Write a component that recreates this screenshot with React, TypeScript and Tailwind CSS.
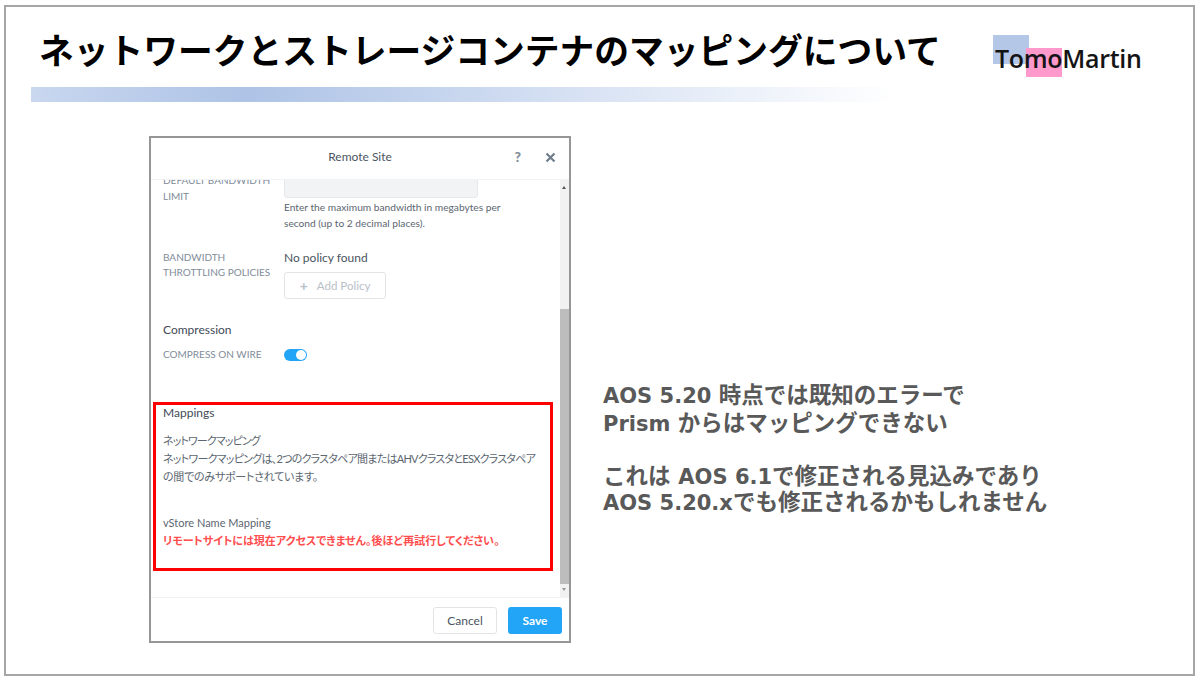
import React from "react";

const jp = "font-['Noto_Sans_CJK_JP','Noto_Sans',sans-serif]";
const ui = "font-['Lato','Noto_Sans_CJK_JP',sans-serif]";

function Label({ children }: { children: React.ReactNode }) {
  return <div className="w-[121px] shrink-0 text-[10px] leading-[15px] text-[#7f8c99]">{children}</div>;
}

function L({ children }: { children: React.ReactNode }) {
  return <span className="text-[21px]">{children}</span>;
}

export default function App() {
  return (
    <div className="w-[1200px] h-[679px] bg-white pl-[4px] pr-[5px] pt-[5px] pb-[3px] overflow-hidden">
      <div className="h-full border-2 border-[#a6a6a6] flex flex-col">
        <div className="flex h-[80px] shrink-0 pl-[33px]">
          <h1 className={`${jp} text-[34.75px] leading-[40px] font-bold text-black whitespace-nowrap mt-[22px] w-[954px]`}>
            ネットワークとストレージコンテナのマッピングについて
          </h1>
          <div className="relative mt-[28px] w-[150px] h-[42px]">
            <div className="absolute left-0 top-0 w-[36px] h-[29px] bg-[#b4c7e7]" />
            <div className="absolute left-[33px] top-[13px] w-[36px] h-[29px] bg-[#ff99cc]" />
            <div className="absolute left-[2px] top-[9px] font-['Open_Sans',sans-serif] text-[25px] leading-[28px] font-semibold text-[#141414] tracking-[-0.3px]">TomoMartin</div>
          </div>
        </div>
        <div className="ml-[25px] w-[864px] h-[15px] shrink-0 bg-gradient-to-r from-[#c9d7ef] via-[#aec3e6] via-[25%] to-white" />
        <div className="flex mt-[34px] pl-[143px]">
          <div className={`${ui} w-[422px] h-[507px] border-2 border-[#969696] bg-white flex flex-col shrink-0`}>
            <div className="relative h-[42px] shrink-0 flex items-center justify-center border-b border-[#f0f2f4]">
              <span className="text-[12px] text-[#4a5560] mt-[-4px]">Remote Site</span>
              <span className="absolute right-[48px] top-[11px] text-[14px] leading-[16px] font-black text-[#7f8c99]">?</span>
              <svg className="absolute right-[13px] top-[14px]" width="11" height="11" viewBox="0 0 11 11">
                <path d="M1.5 1.5 L9.5 9.5 M9.5 1.5 L1.5 9.5" stroke="#6f7d8b" strokeWidth="2.2" />
              </svg>
            </div>
            <div className="flex h-[418px] shrink-0 border-b border-[#f0f2f4]">
              <div className="flex-1 overflow-hidden">
                <div className="mt-[-8px] pl-[12px]">
                  <div className="flex">
                    <div className="w-[121px] shrink-0 text-[10px] leading-[16px] text-[#7f8c99]">DEFAULT BANDWIDTH<br />LIMIT</div>
                    <div>
                      <div className="w-[194px] h-[26px] bg-[#f2f3f5] border border-[#e6e8eb] rounded-b-[3px]" />
                      <p className="mt-[1px] text-[10.2px] leading-[16px] text-[#5c6670] whitespace-nowrap">
                        Enter the maximum bandwidth in megabytes per<br />second (up to 2 decimal places).
                      </p>
                    </div>
                  </div>
                  <div className="flex mt-[19px]">
                    <Label>BANDWIDTH<br />THROTTLING POLICIES</Label>
                    <div>
                      <div className="text-[12px] leading-[16px] text-[#4a5560]">No policy found</div>
                      <div className="mt-[6px] w-[102px] h-[27px] border border-[#e2e5e8] rounded-[3px] flex items-center justify-center gap-[9px] text-[11.5px] text-[#b8c0c8]">
                        <span className="text-[14px] leading-none font-bold">+</span>
                        <span>Add Policy</span>
                      </div>
                    </div>
                  </div>
                  <div className="mt-[23px] text-[12px] leading-[16px] text-[#3f4a55]">Compression</div>
                  <div className="flex items-center mt-[9px]">
                    <Label>COMPRESS ON WIRE</Label>
                    <div className="w-[23px] h-[12px] rounded-full bg-[#22a5f7] relative">
                      <div className="absolute right-[1px] top-[1px] w-[10px] h-[10px] rounded-full bg-white" />
                    </div>
                  </div>
                </div>
                <div className="ml-[2px] mt-[40px] w-[400px] h-[169px] border-[3px] border-[#ff0000] pl-[7px]">
                  <div className="text-[12px] leading-[16px] text-[#3f4a55]">Mappings</div>
                  <div className="mt-[11px] text-[11px] leading-[18px] text-[#5c6670] [font-feature-settings:'palt'] whitespace-nowrap">
                    <div className="tracking-[-0.9px]">ネットワークマッピング</div>
                    <div className="tracking-[-0.75px]">ネットワークマッピングは、2つのクラスタペア間またはAHVクラスタとESXクラスタペア</div>
                    <div className="tracking-[-0.25px]">の間でのみサポートされています。</div>
                  </div>
                  <div className="mt-[28px] text-[11px] leading-[18px] text-[#5c6670]">vStore Name Mapping</div>
                  <div className="text-[11px] leading-[18px] font-bold text-[#ff4d4d] [font-feature-settings:'palt'] whitespace-nowrap">
                    リモートサイトには現在アクセスできません。後ほど再試行してください。
                  </div>
                </div>
              </div>
              <div className="w-[9px] shrink-0 bg-[#f1f1f1] relative">
                <div className="absolute top-[6px] left-[2px] w-0 h-0 border-l-[2.5px] border-r-[2.5px] border-b-[3px] border-l-transparent border-r-transparent border-b-[#555]" />
                <div className="absolute top-[129px] bottom-[13px] left-0 right-0 bg-[#bdbdbd]" />
                <div className="absolute bottom-[6px] left-[2px] w-0 h-0 border-l-[2.5px] border-r-[2.5px] border-t-[3px] border-l-transparent border-r-transparent border-t-[#999]" />
              </div>
            </div>
            <div className="flex-1 flex items-center justify-end gap-[11px] pr-[7px] pt-[2px]">
              <div className="w-[64px] h-[27px] border border-[#e2e5e8] rounded-[3px] flex items-center justify-center text-[12px] text-[#4a5560]">Cancel</div>
              <div className="w-[54px] h-[27px] bg-[#22a5f7] rounded-[3px] flex items-center justify-center text-[12px] font-bold text-white">Save</div>
            </div>
          </div>
          <div className="ml-[32px] mt-[246px] font-['DejaVu_Sans','Noto_Sans_CJK_JP',sans-serif] text-[#595959] text-[22.5px] leading-[27px] font-bold whitespace-nowrap">
            <div className="h-[28px]"><L>AOS 5.20 </L>時点では既知のエラーで</div>
            <div className="h-[28px]"><L>Prism </L>からはマッピングできない</div>
            <div className="h-[26px] mt-[25px]">これは <L>AOS 6.1</L>で修正される見込みであり</div>
            <div className="h-[28px]"><L>AOS 5.20.x</L>でも修正されるかもしれません</div>
          </div>
        </div>
      </div>
    </div>
  );
}
